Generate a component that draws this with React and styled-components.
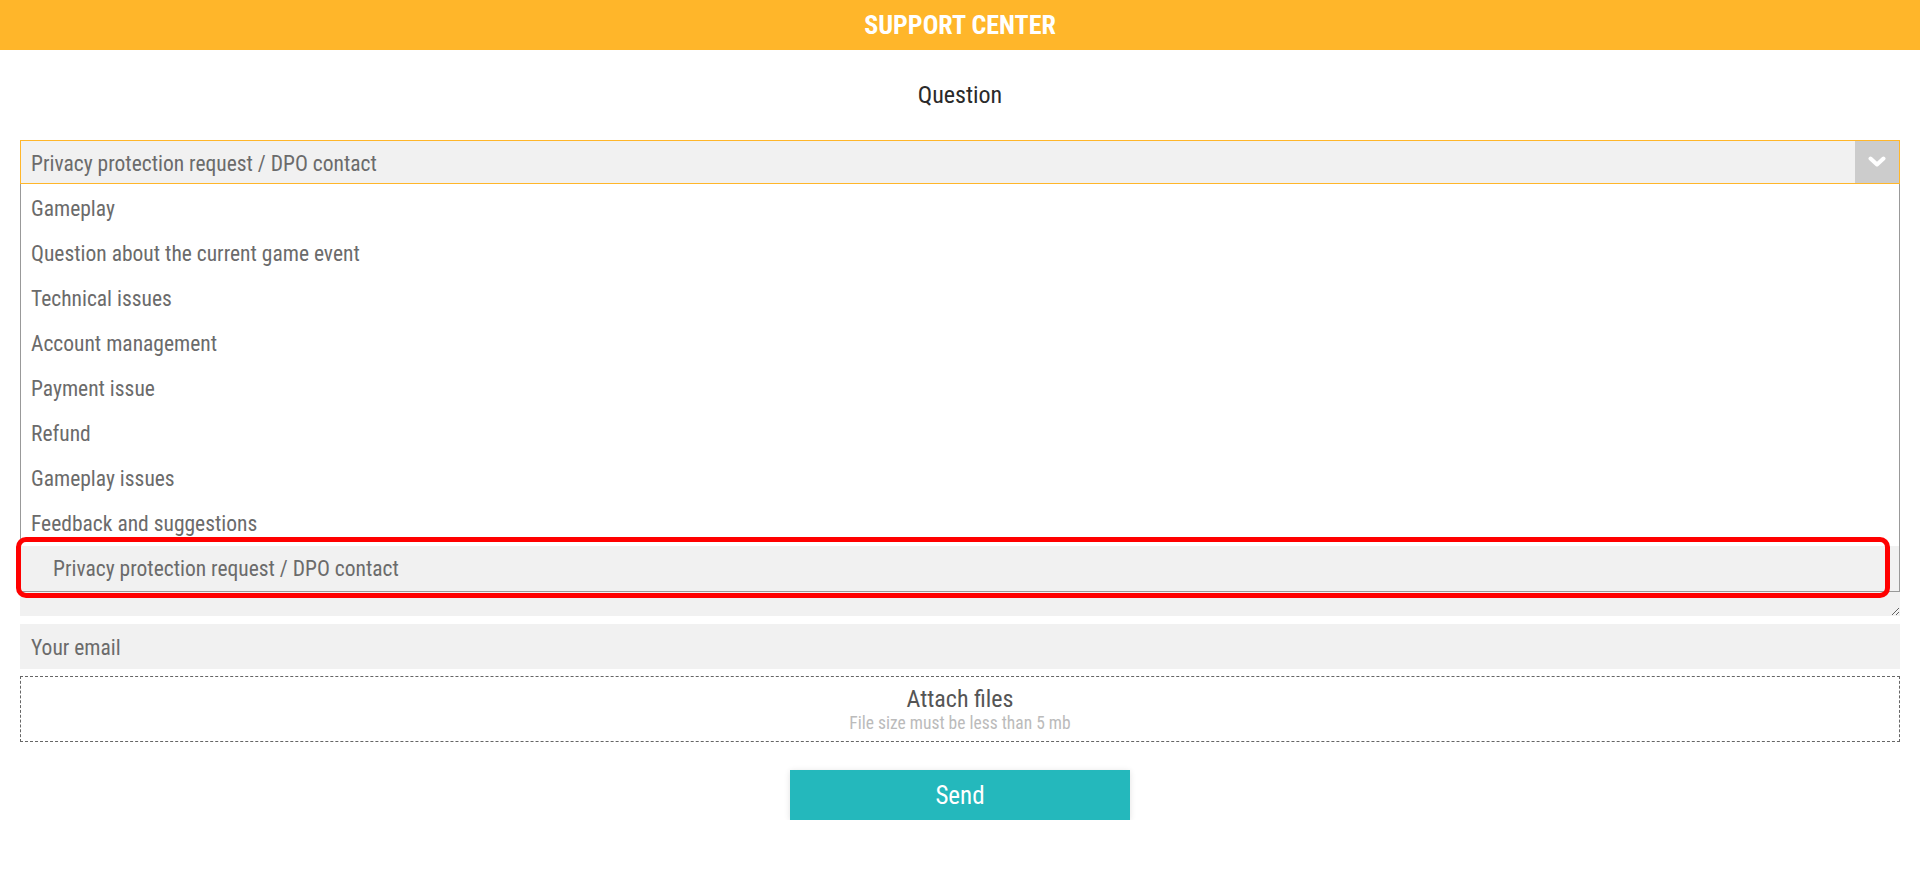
import React from "react";
import styled, { createGlobalStyle } from "styled-components";

const options = [
  "Gameplay",
  "Question about the current game event",
  "Technical issues",
  "Account management",
  "Payment issue",
  "Refund",
  "Gameplay issues",
  "Feedback and suggestions",
  "Privacy protection request / DPO contact",
];

const selected = "Privacy protection request / DPO contact";

export default function App() {
  return (
    <>
      <GlobalStyle />
      <Header>SUPPORT CENTER</Header>
      <Form>
        <Label>Question</Label>
        <SelectWrap>
          <SelectBox>
            <SelectValue>{selected}</SelectValue>
            <ArrowBox>
              <svg width="18" height="12" viewBox="0 0 18 12">
                <polyline points="2.5,2.5 9,8.5 15.5,2.5" fill="none" stroke="#fff" strokeWidth="4" strokeLinecap="round" strokeLinejoin="round" />
              </svg>
            </ArrowBox>
          </SelectBox>
          <OptionList>
            {options.map((opt) => (
              <Option key={opt} $active={opt === selected}>
                {opt}
              </Option>
            ))}
          </OptionList>
          <Highlight />
        </SelectWrap>
        <Message />
        <Email>Your email</Email>
        <Attach>
          <AttachTitle>Attach files</AttachTitle>
          <AttachNote>File size must be less than 5 mb</AttachNote>
        </Attach>
        <SendButton>Send</SendButton>
      </Form>
    </>
  );
}

const GlobalStyle = createGlobalStyle`
  body {
    margin: 0;
    background: #fff;
    font-family: "Roboto Condensed", Roboto, "Liberation Sans", sans-serif;
    font-stretch: condensed;
  }
`;

const Header = styled.div`
  height: 50px;
  background: #ffb62a;
  color: #fff;
  font-size: 26px;
  font-weight: 700;
  display: flex;
  align-items: center;
  justify-content: center;
`;

const Form = styled.div`
  padding: 0 20px;
  display: flex;
  flex-direction: column;
`;

const Label = styled.div`
  height: 90px;
  display: flex;
  align-items: center;
  justify-content: center;
  font-size: 24px;
  font-weight: 400;
  color: #2a2a2a;
`;

const SelectWrap = styled.div`
  position: relative;
`;

const SelectBox = styled.div`
  height: 44px;
  box-sizing: border-box;
  border: 1px solid #ffb62a;
  background: #f1f1f1;
  display: flex;
  align-items: center;
`;

const SelectValue = styled.div`
  flex: 1;
  padding: 2px 0 0 10px;
  font-size: 21.5px;
  color: #6b6b6b;
`;

const ArrowBox = styled.div`
  width: 44px;
  align-self: stretch;
  background: #ccc;
  display: flex;
  align-items: center;
  justify-content: center;
`;

const OptionList = styled.div`
  position: absolute;
  top: 44px;
  left: 0;
  right: 0;
  z-index: 2;
  padding-top: 2px;
  background: #fff;
  border: 1px solid #999;
  border-top: none;
`;

const Option = styled.div`
  height: 45px;
  display: flex;
  align-items: center;
  padding-left: ${(p) => (p.$active ? "32px" : "10px")};
  background: ${(p) => (p.$active ? "#f1f1f1" : "#fff")};
  font-size: 21.5px;
  color: #6b6b6b;
`;

const Highlight = styled.div`
  position: absolute;
  z-index: 3;
  top: 397px;
  left: -4px;
  right: 10px;
  height: 61px;
  box-sizing: border-box;
  border: 5px solid #f00;
  border-radius: 10px;
  pointer-events: none;
`;

const Message = styled.textarea`
  margin-top: 8px;
  height: 424px;
  box-sizing: border-box;
  border: none;
  background: #f1f1f1;
  resize: vertical;
  outline: none;
`;

const Email = styled.div`
  margin-top: 8px;
  height: 45px;
  display: flex;
  align-items: center;
  padding: 2px 0 0 11px;
  box-sizing: border-box;
  background: #f1f1f1;
  font-size: 21.5px;
  color: #6b6b6b;
`;

const Attach = styled.div`
  margin-top: 7px;
  height: 66px;
  box-sizing: border-box;
  border: 1px dashed #666;
  display: flex;
  flex-direction: column;
  align-items: center;
  justify-content: center;
`;

const AttachTitle = styled.div`
  font-size: 24px;
  color: #555;
  line-height: 28px;
`;

const AttachNote = styled.div`
  font-size: 17.5px;
  color: #bbb;
  line-height: 20px;
`;

const SendButton = styled.button`
  margin: 28px auto 0;
  width: 340px;
  height: 50px;
  border: none;
  background: #24b8bc;
  color: #fff;
  font-family: inherit;
  font-size: 25px;
  box-shadow: 0 1px 6px rgba(0, 0, 0, 0.12);
`;
